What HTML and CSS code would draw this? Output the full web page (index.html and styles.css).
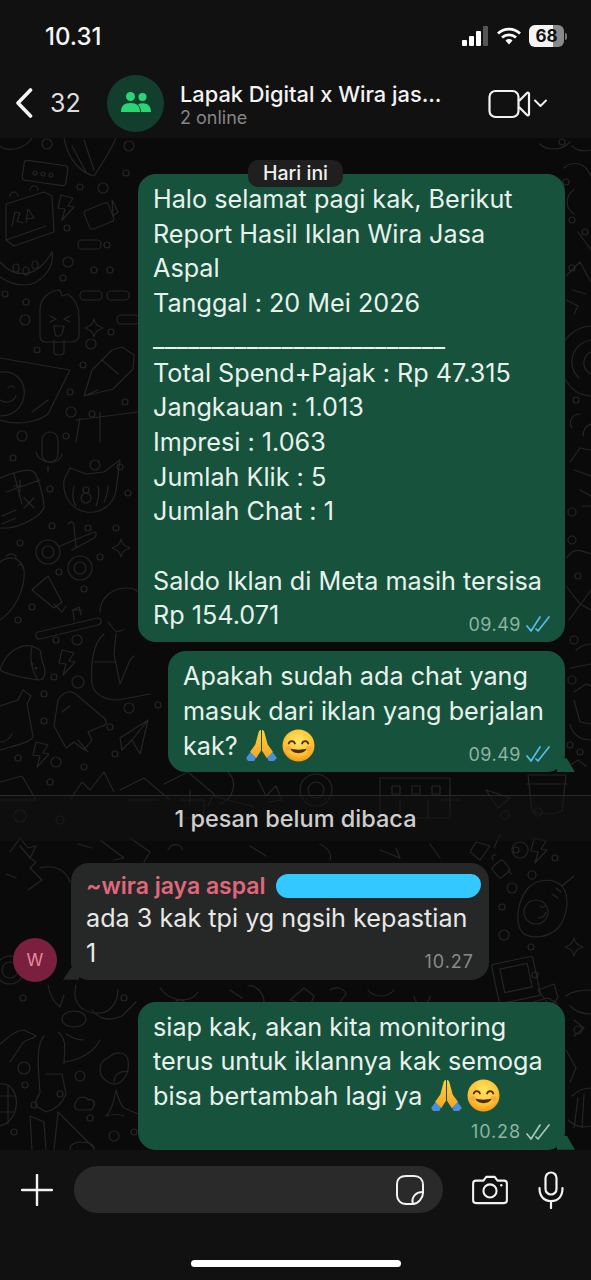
FILE: index.html
```html
<!DOCTYPE html>
<html lang="en">
  <head>
    <meta charset="UTF-8" />
    <meta name="viewport" content="width=device-width, initial-scale=1.0" />
    <title>Lapak Digital x Wira jasa aspal</title>
    <link rel="stylesheet" href="styles.css">
  </head>
  <body>
    <svg class="emoji-defs" width="0" height="0" aria-hidden="true">
      <defs>
        <radialGradient id="smileFill" cx="50%" cy="35%" r="70%">
          <stop offset="0%" stop-color="#ffe566" />
          <stop offset="65%" stop-color="#fdc12f" />
          <stop offset="100%" stop-color="#f28a17" />
        </radialGradient>
        <linearGradient id="handFill" x1="0" y1="0" x2="0" y2="1">
          <stop offset="0%" stop-color="#ffd23f" />
          <stop offset="100%" stop-color="#f5a623" />
        </linearGradient>
        <symbol id="pray" viewBox="0 0 32 32">
          <path d="M1 28l6-8 5 5-3 6H3z" fill="#4a90d9" />
          <path d="M31 28l-6-8-5 5 3 6h5z" fill="#4a90d9" />
          <path d="M15.5 1c-1.5 0-2.3 1.5-2.8 4L10 15l-5 7 6 6 4.5-7z" fill="url(#handFill)" />
          <path d="M16.5 1c1.5 0 2.3 1.5 2.8 4L22 15l5 7-6 6-4.5-7z" fill="url(#handFill)" />
        </symbol>
        <symbol id="smile" viewBox="0 0 32 32">
          <circle cx="16" cy="16" r="15.5" fill="url(#smileFill)" />
          <path d="M6.5 14c1-3 5-3 6 0M19.5 14c1-3 5-3 6 0" fill="none" stroke="#4a2c0a" stroke-width="1.8" stroke-linecap="round" />
          <path d="M8 19c2 6 14 6 16 0-4 1.5-12 1.5-16 0z" fill="#4a2c0a" />
          <circle cx="6" cy="19" r="2.5" fill="#f6915a" opacity=".6" />
          <circle cx="26" cy="19" r="2.5" fill="#f6915a" opacity=".6" />
        </symbol>
        <symbol id="ticks" viewBox="0 0 24 18">
          <path d="M1 11l4 5L14 2M10 14l2 2L23 2" fill="none" stroke="currentColor" stroke-width="1.7" stroke-linecap="round" stroke-linejoin="round" />
        </symbol>
      </defs>
    </svg>

    <div class="phone">
      <div class="status-bar">
        <span class="clock">10.31</span>
        <div class="status-icons">
          <div class="signal">
            <span class="sig-1"></span><span class="sig-2"></span><span class="sig-3"></span><span class="sig-4"></span>
          </div>
          <svg class="wifi" viewBox="0 0 24 18" width="24" height="18">
            <path d="M1 6.5a16 16 0 0 1 22 0M5 10.5a10.5 10.5 0 0 1 14 0" fill="none" stroke="#fff" stroke-width="2.8" />
            <path d="M8.5 13.5a5 5 0 0 1 7 0L12 17.500z" fill="#fff" />
          </svg>
          <div class="battery">68</div>
          <span class="battery-tip"></span>
        </div>
      </div>

      <header class="chat-header">
        <svg class="back" viewBox="0 0 18 30" width="18" height="30">
          <path d="M15.5 2L3 15l12.5 13" fill="none" stroke="#f5f5f5" stroke-width="3.6" stroke-linecap="round" stroke-linejoin="round" />
        </svg>
        <span class="back-count">32</span>
        <div class="group-avatar">
          <svg viewBox="0 0 30 24" width="30" height="24">
            <circle cx="9.5" cy="5.5" r="4.5" fill="#2bd576" />
            <circle cx="21.5" cy="6" r="4" fill="#2bd576" />
            <path d="M0 21c0-6 3-9 9.5-9s9.5 3 9.5 9z" fill="#2bd576" />
            <path d="M20 21c0-3-1-5.5-3-7.5 1.2-.8 2.700-1.200 4.500-1.200 5.500 0 8.500 3 8.500 8.700z" fill="#2bd576" />
          </svg>
        </div>
        <div class="chat-title">
          <div class="chat-name">Lapak Digital x Wira jas...</div>
          <div class="chat-online">2 online</div>
        </div>
        <svg class="video" viewBox="0 0 62 30" width="62" height="30">
          <rect x="1.5" y="2" width="29" height="26" rx="6" fill="none" stroke="#f2f2f2" stroke-width="2.2" />
          <path d="M31 12l8-8c.8-.8 2-.3 2 .8v20.400c0 1.100-1.200 1.600-2 .8l-8-8" fill="none" stroke="#f2f2f2" stroke-width="2.2" stroke-linejoin="round" />
          <path d="M47 11.5l5.500 5.500 5.500-5.500" fill="none" stroke="#f2f2f2" stroke-width="1.9" stroke-linecap="round" stroke-linejoin="round" />
        </svg>
      </header>

      <main class="chat">
        <!-- wallpaper doodles, coordinates are page coordinates -->
        <svg class="wallpaper" viewBox="0 138 591 1012" width="591" height="1012" aria-hidden="true">
          <defs>
            <path id="bolt" d="M4 0l12 3-5 8 6 1-12 13 3-11-7-1z" />
            <path id="spark" d="M9 0c1 5 3 7 9 9-6 2-8 4-9 9-1-5-3-7-9-9 6-2 8-4 9-9z" />
          </defs>
          <g class="doodle">
            <!-- left column, top -->
            <path d="M0 146c8 6 24 4 32-8M64 138c4 22 16 34 30 38 8-12 16-24 22-38M72 146l14 26M84 140l10 30" />
            <rect x="23" y="163" width="44" height="20" rx="3" transform="rotate(8 45 173)" />
            <circle cx="35" cy="173" r="2" /><circle cx="43" cy="174" r="2" /><circle cx="51" cy="175" r="2" />
            <path d="M6 204l38-12 8 4 2 36-40 14-8-6zM6 240l40-14M10 196a4 4 0 0 1 8 0M30 190a4 4 0 0 1 8 0" />
            <path d="M12 226l3-14 5 1-3 8 6 2M26 222l2-13 6 9-7 1" />
            <use href="#bolt" x="57" y="195" />
            <rect x="86" y="206" width="26" height="20" rx="3" transform="rotate(-22 99 216)" />
            <path d="M112 200l6 12-5 4z" />
            <path d="M0 262c14 16 36 18 52-10 3 14-10 33-28 33-10 0-18-4-24-8" />
            <ellipse cx="16" cy="268" rx="3" ry="4" /><ellipse cx="26" cy="271" rx="3" ry="4" /><ellipse cx="35" cy="265" rx="3" ry="4" />
            <rect x="78" y="240" width="23" height="9" rx="4" /><rect x="80" y="291" width="22" height="9" rx="4" /><rect x="107" y="291" width="22" height="9" rx="4" /><rect x="117" y="315" width="22" height="9" rx="4" />
            <path d="M40 310c0-12 10-20 20-20l2 6 6-2c8 6 11 14 11 22v20c0 4-4 6-8 6H46c-4 0-6-2-6-6zM54 340v12c0 4 10 4 10 0v-12M50 316l6 3-6 3M70 316l-6 3 6 3M54 326h10l-2 8c-2 3-6 3-7 0z" />
            <use href="#spark" x="85" y="319" />
            <path d="M84 396l8-26 20-20 10-3 12 8-1 14-20 20zM102 360l16 14M84 396l14-6" />
            <path d="M0 358l70 12-22 44c-10 8-30 12-48 6M0 372c16-2 26 10 24 24-2 14-14 20-24 20M8 388c2-3 5-3 6 0M16 396c-3 6-10 8-16 4M32 412l8-6 8-6" />
            <path d="M76 420l62-8M100 412v30M76 442l4-24" />
            <!-- left column, middle -->
            <rect x="42" y="432" width="16" height="30" rx="8" /><path d="M36 452c2 12 24 14 26 2M48 466v6" />
            <path d="M0 478c20-8 30-10 34-6 4 4 10 26 10 34s-20 20-36 22H0M6 492l34-12M14 474l8 30M14 486h10M20 480v12M24 508l10-10M24 498l10 10M2 516l14-6M2 524l14-6" />
            <path d="M64 480l6-12 16 6 18-2 16-12-4 30c-2 14-14 24-30 22-14-2-24-16-22-32zM74 486c-2 8-2 14 2 20M98 486c2 8 0 14-2 20M108 486c0 6-2 12-4 16" />
            <circle cx="86" cy="498" r="5" /><circle cx="86" cy="490" r="3" />
            <circle cx="48" cy="552" r="12" /><circle cx="48" cy="552" r="6" /><circle cx="80" cy="568" r="12" /><circle cx="80" cy="568" r="6" />
            <path d="M60 546l34-14c3 0 3 4 0 6l-22 12M68 524c3-4 6-2 6 2l2 22" />
            <use href="#spark" x="112" y="539" />
            <path d="M0 562c14-10 26 0 24 16-2 18-12 34-24 42M6 556c6-4 10-2 10 2M18 566c2-3 4-2 5 2" />
            <path d="M32 590l16-14 14 26-8 6zM54 604l8 8 4-6" />
            <path d="M38 632l60-14c4 0 4 6 0 7l-58 14c-4 1-6-6-2-7zM74 620l-1-10 6-3 2 8M72 610h10" />
            <path d="M100 612c0-14 12-24 26-24 6 0 12 2 14 6M108 622l8 10 8-2M104 634c-10 8-14 28-12 50 2 10 12 16 26 16l32-6M116 634l-2 20 6 30 10-24 4-4M94 662h22" />
            <path d="M0 670c6-20 22-26 32-24l8 4 2 10 3 10c0 6-2 10-6 10-14-2-28-4-39-10zM32 646c-2 10-2 22 6 34" />
            <circle cx="32" cy="664" r="1" /><circle cx="36" cy="668" r="1" />
            <use href="#bolt" x="58" y="650" />
            <path d="M0 706l18-6 5-10 8 6-4 8 6 32c0 6-20 10-33 14M0 742c6 0 10-4 12-8" />
            <path d="M58 700c6-10 14-10 20-4l26 22c4 4 2 8-2 8l-14 6 4 8-8 10-10-8-8 6-12-22zM78 740l10 12M62 712l8-6" />
            <path d="M120 738l28-18-8 34-8-14-10 10zM132 740l16-20" />
            <use href="#bolt" x="32" y="742" />
            <!-- left column, bottom -->
            <path d="M0 782l22-6 14 24M0 800h36M70 800l12-18 8 8 14-18 10 20M120 790l24-12 26 22M128 800h30" />
            <path d="M10 852l10-14 8 10 8-2-6 12 6 4-6 6 12 12-14 10M6 874l10 4" />
            <path d="M40 868c14-4 26 2 30 14" />
            <circle cx="10" cy="970" r="14" /><circle cx="10" cy="970" r="8" />
            <path d="M48 985c2 10 6 18 12 22l4-12M76 985c-4 16 4 26 18 28 14 2 24-8 24-24M92 1010c6 8 16 12 30 6l14-14" />
            <ellipse cx="74" cy="1019" rx="12" ry="8" />
            <path d="M0 1044c10-8 16-14 24-14l12 6c-4 4-10 2-14 8l-12 18M44 1036c-8 8-6 32-4 56 0 4-6 6-4 14l10 6c8-2 16-8 20-18l-4-20h-16M58 1032c10 8 6 20 6 32M66 1034c6 4 12 6 18 6M100 1040c-6 12-20 20-36 22" />
            <path d="M108 1058c8-8 18-6 20 2 2 12-4 22-12 24-8 0-16-6-16-14 0-6 2-10 8-12zM128 1072c-6-2-14 2-14 10" />
            <path d="M0 1084c14-2 20 16 14 30-4 8-8 10-14 12M0 1096h16M0 1112h14M8 1086v38" />
            <path d="M76 1102c2-6 10-6 12-2 4-2 8 2 6 6s-2 4-6 4H78c-4 0-4-6-2-8z" />
            <path d="M116 1090c-2 10-4 20-10 26 6-2 12-2 18 0M116 1090c2 8 4 14 8 18l14 6" />
            <path d="M30 1116l2 34M30 1116l14 6 2 28M58 1112l36 36M58 1112l-4 38" />
            <ellipse cx="82" cy="1148" rx="12" ry="6" />
            <g class="dots">
              <circle cx="47" cy="144" r="5" /><circle cx="129" cy="146" r="5" /><circle cx="80" cy="187" r="3" /><circle cx="103" cy="188" r="5" /><circle cx="126" cy="173" r="3" /><circle cx="67" cy="228" r="3" />
              <circle cx="107" cy="245" r="3" /><circle cx="68" cy="262" r="5" /><circle cx="94" cy="270" r="3" /><circle cx="110" cy="270" r="3" /><circle cx="63" cy="278" r="3" /><circle cx="5" cy="294" r="3" /><circle cx="26" cy="302" r="3" /><circle cx="25" cy="320" r="5" /><circle cx="37" cy="350" r="3" /><circle cx="91" cy="344" r="5" /><circle cx="111" cy="332" r="3" /><circle cx="83" cy="365" r="3" /><circle cx="70" cy="392" r="3" /><circle cx="71" cy="412" r="5" /><circle cx="92" cy="414" r="3" /><circle cx="125" cy="402" r="3" /><circle cx="66" cy="436" r="3" /><circle cx="22" cy="436" r="5" /><circle cx="13" cy="458" r="3" /><circle cx="95" cy="465" r="5" /><circle cx="120" cy="467" r="3" /><circle cx="50" cy="489" r="3" /><circle cx="128" cy="493" r="3" />
              <circle cx="52" cy="526" r="3" /><circle cx="88" cy="528" r="3" /><circle cx="20" cy="543" r="3" /><circle cx="116" cy="528" r="3" /><circle cx="100" cy="557" r="3" /><circle cx="59" cy="572" r="3" /><circle cx="84" cy="589" r="3" /><circle cx="32" cy="607" r="3" /><circle cx="18" cy="620" r="3" /><circle cx="56" cy="640" r="3" /><circle cx="77" cy="640" r="5" /><circle cx="54" cy="677" r="3" /><circle cx="78" cy="682" r="6" /><circle cx="44" cy="694" r="3" /><circle cx="129" cy="708" r="5" /><circle cx="158" cy="705" r="3" /><circle cx="44" cy="721" r="3" /><circle cx="110" cy="727" r="3" /><circle cx="115" cy="754" r="3" /><circle cx="56" cy="762" r="5" /><circle cx="18" cy="758" r="3" /><circle cx="84" cy="767" r="3" /><circle cx="50" cy="782" r="3" /><circle cx="20" cy="816" r="6" /><circle cx="60" cy="820" r="4" />
              <circle cx="23" cy="998" r="3" /><circle cx="124" cy="998" r="3" /><circle cx="24" cy="1068" r="6" /><circle cx="80" cy="1076" r="5" /><circle cx="25" cy="1085" r="3" /><circle cx="60" cy="1094" r="3" /><circle cx="34" cy="1105" r="3" /><circle cx="90" cy="1118" r="3" /><circle cx="14" cy="1132" r="3" /><circle cx="114" cy="1136" r="5" /><circle cx="134" cy="1132" r="3" />
            </g>
            <!-- middle band under the second bubble -->
            <path d="M164 784l24-12 26 22-6 12M210 795l44 12M190 790v14M180 800h24v18h-24M228 772c10 10 6 26-8 32M258 780l8 16 10-10 6 14-14 2M300 790a16 16 0 1 0 32 0 16 16 0 1 0-32 0M308 790a8 8 0 1 0 16 0 8 8 0 1 0-16 0" />
            <path d="M380 778h70v40h-70zM392 786h8v8h-8zM412 786h8v8h-8zM432 786h8v8h-8zM400 800v18M428 800v18" />
            <path d="M486 790l24 8-12 10zM528 775h38l-4 36c-8 4-22 4-30 0zM526 784h42" />
            <path d="M440 800h20M450 790v20M476 842l14 4-10 14-10-8zM500 834l-6 14M520 842a8 8 0 1 0 .1 0" />
            <path d="M78 844l14 4M100 840l24 18-10 2M130 838l20 14-6 10M20 846l10 12M168 850c4-8 14-6 14 0" />
            <path d="M250 846l16 10M320 844c8 4 12 10 10 16M380 850l20 8-4-10M430 844l10 14" />
            <!-- under wira bubble -->
            <path d="M160 988c10 14 30 16 38 4M180 1000a6 6 0 1 0 .1 0M230 990l12 8M248 986c8-2 16 8 16 16M290 1000l14-12 10 8-4 10zM330 990c6-4 14-2 16 4l-6 8M368 990c6 8 20 8 26 0M414 996a8 8 0 1 0 16 0" />
            <!-- right column -->
            <path d="M540 144c6 6 20 8 30-2M572 146c4 4 10 6 19 4M564 168c6-6 16-6 22 0l5 8M574 190a14 14 0 0 0 0 24M578 232l13 18M566 276l14-14 11 20M572 290l14 4M566 300l12 6-4 8" />
            <path d="M591 326a34 34 0 0 0-24 56 30 30 0 0 0 24 14M591 340a22 22 0 0 0-12 38M591 352a12 12 0 0 0 0 22" />
            <path d="M580 414c-8 0-12 8-8 14M591 424c-6 2-8 6-8 12M570 462l10-14 11 2M574 470l17 6M580 490l11 6M582 506h9M566 558l6-6c6-4 12 0 19 2M591 590l-22 30M566 586l14 18 11 6" />
            <path d="M576 650c6-6 15-6 15-6M570 668l21-4M574 692l12-8 5 2M574 700l6 22 11 2M570 724c2 10 10 16 21 16M566 768l12-8 8 6" />
            <path d="M528 888c10-10 26-10 34-2 8 10 6 30-4 42-10 10-28 12-36 4-8-10-4-32 6-44zM562 886l12-10M536 900a12 12 0 1 0 .1 0M540 906c2 2 3 2 5 0M546 912c-1 4-4 6-8 6M552 894l6 4M556 888l5 4" />
            <use href="#spark" x="565" y="938" />
            <rect x="495" y="960" width="42" height="40" rx="2" transform="rotate(-12 516 980)" />
            <rect x="502" y="966" width="28" height="24" transform="rotate(-12 516 978)" />
            <path d="M538 990l16-6 4 14-8 8zM518 1006l30-8 10 6" />
            <rect x="494" y="862" width="14" height="14" rx="3" transform="rotate(-40 501 869)" />
            <path d="M508 870c2 2 2 4 4 4M493 860c-2-3 0-6 3-5" />
            <use href="#bolt" x="530" y="838" />
            <path d="M566 996c8-6 18-6 25-6M570 1006c6 6 14 8 21 8M574 1020l10 8-10 8M566 1050l10 18-6 14M572 1096c6-6 14-8 19-8M568 1120c6 6 14 8 23 6M578 1098l-4 30M584 1094l-2 34" />
            <g class="dots">
              <circle cx="562" cy="142" r="3" /><circle cx="566" cy="182" r="3" /><circle cx="572" cy="220" r="3" /><circle cx="585" cy="232" r="3" /><circle cx="572" cy="268" r="3" /><circle cx="576" cy="400" r="3" /><circle cx="572" cy="512" r="4" /><circle cx="572" cy="540" r="4" /><circle cx="578" cy="576" r="3" /><circle cx="574" cy="640" r="4" /><circle cx="572" cy="680" r="4" /><circle cx="570" cy="745" r="3" /><circle cx="580" cy="752" r="3" />
              <circle cx="505" cy="815" r="4" /><circle cx="538" cy="812" r="4" /><circle cx="516" cy="850" r="3" /><circle cx="555" cy="858" r="3" /><circle cx="532" cy="875" r="4" /><circle cx="512" cy="888" r="5" /><circle cx="502" cy="907" r="3" /><circle cx="504" cy="935" r="5" /><circle cx="531" cy="947" r="3" /><circle cx="535" cy="975" r="3" /><circle cx="578" cy="1030" r="4" />
            </g>
          </g>
        </svg>

        <div class="date-pill">Hari ini</div>

        <div class="bubble bubble-first">
          <div class="text">Halo selamat pagi kak, Berikut<br>Report Hasil Iklan Wira Jasa<br>Aspal<br>Tanggal : 20 Mei 2026<br><span class="rule">_________________________</span><br>Total Spend+Pajak : Rp 47.315<br>Jangkauan : 1.013<br>Impresi : 1.063<br>Jumlah Klik : 5<br>Jumlah Chat : 1<br><br>Saldo Iklan di Meta masih tersisa<br>Rp 154.071</div>
          <div class="meta"><span>09.49</span><svg class="ticks read"><use href="#ticks" /></svg></div>
        </div>

        <div class="bubble bubble-out tail-right">
          <div class="text">Apakah sudah ada chat yang<br>masuk dari iklan yang berjalan<br>kak? <svg class="emoji"><use href="#pray" /></svg><svg class="emoji"><use href="#smile" /></svg></div>
          <div class="meta"><span>09.49</span><svg class="ticks read"><use href="#ticks" /></svg></div>
        </div>

        <div class="unread">1 pesan belum dibaca</div>

        <div class="incoming">
          <div class="avatar">W</div>
          <div class="bubble bubble-in">
            <div class="sender">
              <span class="sender-name">~wira jaya aspal</span>
              <span class="redacted"></span>
            </div>
            <div class="text">ada 3 kak tpi yg ngsih kepastian<br>1</div>
            <div class="meta"><span>10.27</span></div>
          </div>
        </div>

        <div class="bubble bubble-last tail-right">
          <div class="text">siap kak, akan kita monitoring<br>terus untuk iklannya kak semoga<br>bisa bertambah lagi ya <svg class="emoji"><use href="#pray" /></svg><svg class="emoji"><use href="#smile" /></svg></div>
          <div class="meta meta-below"><span>10.28</span><svg class="ticks"><use href="#ticks" /></svg></div>
        </div>
      </main>

      <footer class="composer">
        <div class="composer-row">
          <svg viewBox="0 0 32 32" width="32" height="32">
            <path d="M16 1v30M1 16h30" stroke="#f2f2f2" stroke-width="2.4" stroke-linecap="round" />
          </svg>
          <div class="input">
            <svg viewBox="0 0 30 32" width="30" height="32">
              <path d="M18 30H11C5.5 30 2 26 2 21V10c0-5 3.5-8 9-8h8c5.5 0 9 3.5 9 9v8c0 5-5 11-10 11z" fill="none" stroke="#f2f2f2" stroke-width="2" />
              <path d="M18 30c-2-6 2-12 10-12" fill="none" stroke="#f2f2f2" stroke-width="2" />
            </svg>
          </div>
          <svg class="camera" viewBox="0 0 38 32" width="36" height="30">
            <path d="M4 6h8l3-4h9l3 4h7c1.5 0 3 1.2 3 3v18c0 1.8-1.5 3-3 3H4c-1.5 0-3-1.2-3-3V9c0-1.8 1.5-3 3-3z" fill="none" stroke="#f2f2f2" stroke-width="2.2" stroke-linejoin="round" />
            <circle cx="19" cy="17" r="7" fill="none" stroke="#f2f2f2" stroke-width="2.2" />
            <circle cx="31" cy="11" r="1.3" fill="#f2f2f2" />
          </svg>
          <svg class="mic" viewBox="0 0 26 38" width="26" height="38">
            <rect x="7.5" y="1.5" width="11" height="22" rx="5.5" fill="none" stroke="#f2f2f2" stroke-width="2.2" />
            <path d="M1.5 17c0 8 4 13 11.5 13s11.500-5 11.500-13M13 30v7" fill="none" stroke="#f2f2f2" stroke-width="2.2" stroke-linecap="round" />
          </svg>
        </div>
        <div class="home-bar"></div>
      </footer>
    </div>
  </body>
</html>
```

FILE: styles.css
```css
* {
  box-sizing: border-box;
}

body {
  margin: 0;
  background-color: #111;
  color: #e8f2ed;
  font-family: Inter, "Liberation Sans", sans-serif;
  font-feature-settings: "calt" 0;
}

.emoji-defs {
  display: block;
  height: 0;
}

.phone {
  width: 591px;
  height: 1280px;
  display: flex;
  flex-direction: column;
  overflow: hidden;
}

/* status bar */
.status-bar {
  height: 68px;
  flex: none;
  display: flex;
  justify-content: space-between;
  align-items: center;
  padding: 4px 24px 0 45px;
}

.clock {
  color: #f5f5f5;
  font-size: 24px;
  font-weight: 500;
}

.status-icons {
  display: flex;
  align-items: center;
}

.signal {
  display: flex;
  align-items: flex-end;
  gap: 2px;
  height: 20px;
  margin-right: 9px;
}

.signal span {
  width: 5px;
  background-color: #fff;
  border-radius: 1px;
}

.sig-1 {
  height: 6px;
}

.sig-2 {
  height: 10px;
}

.sig-3 {
  height: 15px;
}

.signal .sig-4 {
  height: 20px;
  background-color: #555;
}

.wifi {
  margin-right: 8px;
}

.battery {
  width: 35px;
  height: 22px;
  border-radius: 6px;
  background: linear-gradient(to right, #f5f5f5 68%, #8a8a8a 68%);
  color: #111;
  font-size: 17px;
  font-weight: 700;
  line-height: 22px;
  text-align: center;
}

.battery-tip {
  width: 2px;
  height: 7px;
  margin-left: 1px;
  background-color: #777;
  border-radius: 0 2px 2px 0;
}

/* chat header */
.chat-header {
  height: 70px;
  flex: none;
  display: flex;
  align-items: center;
  padding: 0 0 0 15px;
}

.back {
  margin-right: 17px;
}

.back-count {
  width: 57px;
  color: #dedede;
  font-size: 25px;
}

.group-avatar {
  width: 57px;
  height: 57px;
  flex: none;
  display: flex;
  align-items: center;
  justify-content: center;
  border-radius: 50%;
  background-color: #123f2d;
}

.chat-title {
  width: 308px;
  margin-left: 16px;
  padding-top: 2px;
}

.chat-name {
  color: #f3f3f3;
  font-size: 21.8px;
  font-weight: 500;
  line-height: 28px;
}

.chat-online {
  color: #858585;
  font-size: 18px;
  line-height: 20px;
}

.video {
  margin-top: 2px;
}

/* chat area */
.chat {
  position: relative;
  height: 1012px;
  flex: none;
  display: flex;
  flex-direction: column;
  padding-top: 22px;
  overflow: hidden;
  background-color: #0a0a0a;
}

.wallpaper {
  position: absolute;
  top: 0;
  left: 0;
}

.doodle {
  fill: none;
  stroke: #252525;
  stroke-width: 1.2;
  stroke-linecap: round;
  stroke-linejoin: round;
}

.date-pill {
  position: relative;
  z-index: 1;
  align-self: center;
  margin: 0 0 -13px;
  height: 27px;
  padding: 0 15px;
  border-radius: 10px;
  background-color: #1e1f1e;
  color: #f0f0f0;
  font-size: 19.5px;
  font-weight: 500;
  line-height: 27px;
}

.bubble {
  position: relative;
  align-self: flex-end;
  margin-right: 26px;
  padding: 8px 15px 8px 16px;
  border-radius: 18px;
  background-color: #17523d;
}

.bubble-first {
  width: 427px;
}

.bubble-out {
  width: 397px;
  margin-top: 9px;
}

.bubble-last {
  width: 427px;
  margin-top: 22px;
}

.tail-right::after {
  content: "";
  position: absolute;
  right: -10px;
  bottom: 0;
  width: 18px;
  height: 14px;
  background-color: #17523d;
  clip-path: polygon(0 0, 55% 0, 100% 100%, 0 100%);
}

.text {
  margin-left: -1px;
  font-size: 25.2px;
  line-height: 34.7px;
  white-space: nowrap;
}

.rule {
  letter-spacing: 0.2px;
}

.emoji {
  width: 33px;
  height: 33px;
  margin-right: 4px;
  vertical-align: -7px;
}

.meta {
  display: flex;
  justify-content: flex-end;
  align-items: center;
  gap: 5px;
  height: 20px;
  margin-top: -19px;
  color: #8db3a4;
  font-size: 18px;
  letter-spacing: 0.5px;
}

.meta-below {
  margin-top: 8px;
  letter-spacing: 0.9px;
}

.ticks {
  width: 24px;
  height: 18px;
  color: #a9c4b9;
}

.ticks.read {
  color: #53bdeb;
}

/* unread divider */
.unread {
  position: relative;
  height: 46px;
  margin: 23px 0 22px;
  border-top: 1px solid #2a2a2a;
  background-color: rgba(18, 18, 18, 0.55);
  color: #cfcfcf;
  font-size: 23.5px;
  font-weight: 500;
  line-height: 45px;
  text-align: center;
}

/* incoming */
.incoming {
  position: relative;
  display: flex;
  align-items: flex-end;
  gap: 14px;
  padding-left: 13px;
}

.avatar {
  width: 44px;
  height: 44px;
  flex: none;
  margin-bottom: -2px;
  border-radius: 50%;
  background-color: #7b1f3e;
  color: #e58aa0;
  font-size: 17px;
  line-height: 44px;
  text-align: center;
}

.bubble-in {
  width: 418px;
  align-self: auto;
  margin-right: 0;
  padding: 7px 15px 8px 15px;
  background-color: #262727;
}

.bubble-in::after {
  content: "";
  position: absolute;
  left: -8px;
  bottom: 0;
  width: 16px;
  height: 12px;
  background-color: #262727;
  clip-path: polygon(50% 0, 100% 0, 100% 100%, 0 100%);
}

.bubble-in .text {
  margin-left: 0;
  color: #e8e8e8;
}

.bubble-in .meta {
  color: #8a8a8a;
  letter-spacing: 1px;
}

.sender {
  display: flex;
  align-items: center;
  gap: 10px;
  height: 31px;
}

.sender-name {
  color: #e0687c;
  font-size: 23px;
  font-weight: 600;
  white-space: nowrap;
}

.redacted {
  width: 205px;
  height: 24px;
  flex: none;
  border-radius: 12px 10px 14px 12px;
  background-color: #33c8ff;
}

/* bottom bar */
.composer {
  flex: 1;
  display: flex;
  flex-direction: column;
  background-color: #111;
}

.composer-row {
  display: flex;
  align-items: center;
  height: 47px;
  margin-top: 16px;
  padding-left: 21px;
}

.input {
  width: 369px;
  height: 47px;
  flex: none;
  display: flex;
  align-items: center;
  justify-content: flex-end;
  margin: 0 29px 0 21px;
  padding-right: 18px;
  border-radius: 24px;
  background-color: #2a2a2a;
}

.mic {
  margin-left: 30px;
}

.home-bar {
  width: 210px;
  height: 7px;
  margin: 47px auto 0;
  border-radius: 4px;
  background-color: #fff;
}
```
